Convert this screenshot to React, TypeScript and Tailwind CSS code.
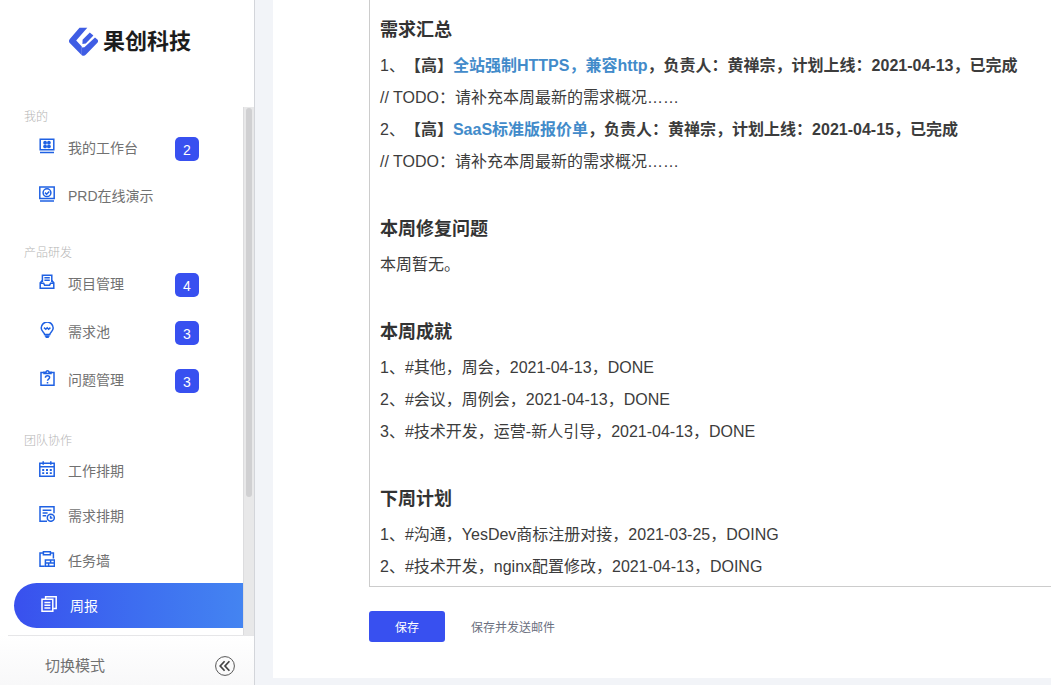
import type { ReactNode } from "react";

type MenuItem = {
  label: string;
  icon: ReactNode;
  badge?: number;
  active?: boolean;
};

type MenuSection = {
  title: string;
  className: string;
  itemClassName: string;
  items: MenuItem[];
};

function Icon({ children }: { children: ReactNode }) {
  return (
    <svg
      className="w-4 h-4 mb-1 shrink-0"
      viewBox="0 0 16 16"
      fill="none"
      stroke="currentColor"
      strokeWidth="1.5"
      aria-hidden="true"
    >
      {children}
    </svg>
  );
}

const icons = {
  workbench: (
    <Icon>
      <path d="M1.2 1.2h13.6v10.6H1.2zM1 14.6h14" />
      <g fill="currentColor" stroke="none">
        <circle cx="6.1" cy="4.7" r="1.9" />
        <circle cx="9.9" cy="4.7" r="1.9" />
        <circle cx="6.1" cy="8.4" r="1.9" />
        <circle cx="9.9" cy="8.4" r="1.9" />
      </g>
    </Icon>
  ),
  demo: (
    <Icon>
      <path d="M.8 1h14.4v11.4H.8zM1 15h14" />
      <circle cx="8" cy="6.7" r="3.9" />
      <path d="M6 6.6l1.6 1.6 2.7-2.8" />
    </Icon>
  ),
  project: (
    <Icon>
      <path d="M3.4 8V1.2h9.4V8M5.4 3.8h5.4M5.4 6.2h5.4" />
      <path d="M3.4 6.6L1.2 8.8v5.4h13.6V8.8l-2-2.2M1.2 9.2h3.4l1 2h5l1-2h3.2" />
    </Icon>
  ),
  pool: (
    <Icon>
      <path d="M5.6 12.4c0-1.8-3.4-3-3.4-6.3a5.9 5.9 0 0 1 12 0c0 3.3-3.4 4.5-3.4 6.3z" />
      <path d="M5 5.6l1.8 1.6 1.4-1.4 1.4 1.4 1.8-1.6M5.8 14h4.8M6.6 15.4h3.2" />
    </Icon>
  ),
  issue: (
    <Icon>
      <path d="M5 2.4H2v12.8h13V2.4h-3" />
      <path d="M5 3.6V2.2l2-.2c.3-1.6 2.7-1.6 3 0l2 .2v1.4z" />
      <path d="M6.4 7.7c0-2.7 4.2-2.6 4.2-.2 0 1.5-2.1 1.7-2.1 3.3M8.5 12v1.4" />
    </Icon>
  ),
  calendar: (
    <Icon>
      <path d="M.8 2.2h14.4v13H.8zM.8 5.8h14.4M4.2.2v3.6M11.8.2v3.6" />
      <path
        d="M3.2 9h2M7 9h2M10.8 9h2M3.2 12.2h2M7 12.2h2M10.8 12.2h2"
        strokeWidth="1.8"
      />
    </Icon>
  ),
  schedule: (
    <Icon>
      <path d="M15 7.2V.8H1v14.4h7M3.6 4.2h8.8M3.6 7h5M3.6 9.8h3.6" />
      <circle cx="11.8" cy="11.8" r="3.5" />
      <path d="M11.6 9.8v2.3h1.8" />
    </Icon>
  ),
  wall: (
    <Icon>
      <path d="M4.4 2H1v13.2h4.8M11.4 2h3v5.6M4.4.8h7v3h-7z" />
      <path d="M6.4 9h9v6.2h-9zM6.4 12.1h9M11.6 9v3.1M9.6 12.1v3.1" />
    </Icon>
  ),
  report: (
    <Icon>
      <path d="M4.6 3V.8h10.6v11.8h-3" />
      <path d="M1 3.2h10.8v12H1zM3.4 6.4h6M3.4 9.2h6M3.4 12h6" />
    </Icon>
  ),
};

const sections: MenuSection[] = [
  {
    title: "我的",
    className: "",
    itemClassName: "h-12",
    items: [
      { label: "我的工作台", icon: icons.workbench, badge: 2 },
      { label: "PRD在线演示", icon: icons.demo },
    ],
  },
  {
    title: "产品研发",
    className: "mt-6",
    itemClassName: "h-12",
    items: [
      { label: "项目管理", icon: icons.project, badge: 4 },
      { label: "需求池", icon: icons.pool, badge: 3 },
      { label: "问题管理", icon: icons.issue, badge: 3 },
    ],
  },
  {
    title: "团队协作",
    className: "mt-7",
    itemClassName: "h-[45px]",
    items: [
      { label: "工作排期", icon: icons.calendar },
      { label: "需求排期", icon: icons.schedule },
      { label: "任务墙", icon: icons.wall },
      { label: "周报", icon: icons.report, active: true },
    ],
  },
];

const requirements = [
  {
    name: "全站强制HTTPS，兼容http",
    detail: "，负责人：黄禅宗，计划上线：2021-04-13，已完成",
  },
  {
    name: "SaaS标准版报价单",
    detail: "，负责人：黄禅宗，计划上线：2021-04-15，已完成",
  },
];

const notes = [
  { title: "本周修复问题", lines: ["本周暂无。"] },
  {
    title: "本周成就",
    lines: [
      "1、#其他，周会，2021-04-13，DONE",
      "2、#会议，周例会，2021-04-13，DONE",
      "3、#技术开发，运营-新人引导，2021-04-13，DONE",
    ],
  },
  {
    title: "下周计划",
    lines: [
      "1、#沟通，YesDev商标注册对接，2021-03-25，DOING",
      "2、#技术开发，nginx配置修改，2021-04-13，DOING",
    ],
  },
];

function Logo() {
  return (
    <div className="flex items-center gap-1 h-[107px] pl-[69px] pb-6">
      <svg className="w-[30px] h-[30px]" viewBox="0 0 30 30" aria-hidden="true">
        <path
          d="M10.5.8h7.8L7.2 13.4l5.6 6.2v8.6L1 16.2a3.2 3.2 0 0 1 0-4.4z"
          fill="#3f5de4"
        />
        <path
          d="M12.8 20.6l2.6-.4L26 10.4l2.4 2.2c.9.9.9 2.2 0 3.2L17 27.6c-1.4 1.4-2.8 1.6-4.2.6z"
          fill="#3f5de4"
        />
        <path
          d="M20.8 5.6l3.6 3-7.6 7.8-3.4.6.2-4.2z"
          fill="#3f5de4"
        />
      </svg>
      <span className="text-[22px] leading-7 font-bold text-[#1c1c1c]">
        果创科技
      </span>
    </div>
  );
}

function Sidebar() {
  return (
    <aside className="w-[255px] shrink-0 flex flex-col border-r border-[#d3d5da] bg-white">
      <Logo />
      <div className="flex">
        <nav className="flex-1 pt-px pb-[7px]">
          {sections.map((section) => (
            <div key={section.title} className={section.className}>
              <h2 className="pl-6 text-xs leading-[18px] -mb-0.5 font-light text-[#b5b5b5]">
                {section.title}
              </h2>
              <ul>
                {section.items.map((item) => (
                  <li key={item.label} className="pl-3.5">
                    <a
                      href="#"
                      className={`flex items-center text-sm ${section.itemClassName} ${
                        item.active
                          ? "pl-[27px] gap-[13px] rounded-l-full bg-linear-to-r from-[#3950ee] to-[#4484f1] text-white"
                          : "pl-[25px] gap-[13px] text-[#1f61e3]"
                      }`}
                    >
                      {item.icon}
                      <span
                        className={
                          item.active ? "text-white" : "text-[#717171]"
                        }
                      >
                        {item.label}
                      </span>
                      {item.badge && (
                        <span className="ml-auto mr-11 mt-0.5 w-6 h-6 rounded-[5px] bg-[#3850f0] text-white text-sm leading-[26px] text-center">
                          {item.badge}
                        </span>
                      )}
                    </a>
                  </li>
                ))}
              </ul>
            </div>
          ))}
        </nav>
        {/* スクロールバー */}
        <div className="w-[11px] px-0.5 py-px border-l border-[#dcdcde] bg-[#e8e8e9]">
          <div className="h-[74%] rounded-full bg-[#d0d0d2]" />
        </div>
      </div>
      <div className="flex-1 flex flex-col pl-2 bg-linear-to-b from-white to-[#f8f8f9]">
        <div className="flex items-center justify-between pl-[37px] pr-[19px] pt-3 border-t border-[#e6e6e8]">
          <span className="text-[15px] text-[#717171]">切换模式</span>
          <button type="button" aria-label="收起菜单" className="py-2">
            <svg
              className="w-5 h-5"
              viewBox="0 0 20 20"
              fill="none"
              stroke="#444"
              aria-hidden="true"
            >
              <circle cx="10" cy="10" r="9.4" strokeWidth="0.9" />
              <path
                d="M9.6 5.2L5.2 10l4.4 4.8M14.4 5.2L10 10l4.4 4.8"
                strokeWidth="1.7"
              />
            </svg>
          </button>
        </div>
      </div>
    </aside>
  );
}

function Heading({ children }: { children: ReactNode }) {
  return (
    <h3 className="text-lg leading-[39px] font-bold text-[#333]">{children}</h3>
  );
}

function Report() {
  return (
    <article className="flex flex-col gap-8 pl-2.5 pt-[11px] pb-[3px] border-l border-b border-[#ccc] text-base leading-8 text-[#3c3c3c] whitespace-nowrap">
      <section>
        <Heading>需求汇总</Heading>
        {requirements.map((req, index) => (
          <div key={req.name}>
            <p>
              {index + 1}、
              <strong>
                【高】
                <a href="#" className="text-[#428bca]">
                  {req.name}
                </a>
                {req.detail}
              </strong>
            </p>
            <p>// TODO：请补充本周最新的需求概况……</p>
          </div>
        ))}
      </section>
      {notes.map((note) => (
        <section key={note.title}>
          <Heading>{note.title}</Heading>
          {note.lines.map((line) => (
            <p key={line}>{line}</p>
          ))}
        </section>
      ))}
    </article>
  );
}

export default function App() {
  return (
    <div className="flex min-h-screen overflow-hidden bg-[#f2f4f8] font-['Liberation_Sans','Noto_Sans_CJK_SC',sans-serif] [text-spacing-trim:space-all]">
      <Sidebar />
      <main className="flex-1 min-w-0 ml-[18px] mb-[7px] pl-24 bg-white">
        <Report />
        <div className="flex items-center mt-6 text-xs">
          <button
            type="button"
            className="px-[26px] pt-0.5 h-[31px] rounded-[3px] bg-[#3850f0] text-white"
          >
            保存
          </button>
          <button
            type="button"
            className="px-[26px] pt-0.5 h-[31px] text-[#6b7080]"
          >
            保存并发送邮件
          </button>
        </div>
      </main>
    </div>
  );
}
